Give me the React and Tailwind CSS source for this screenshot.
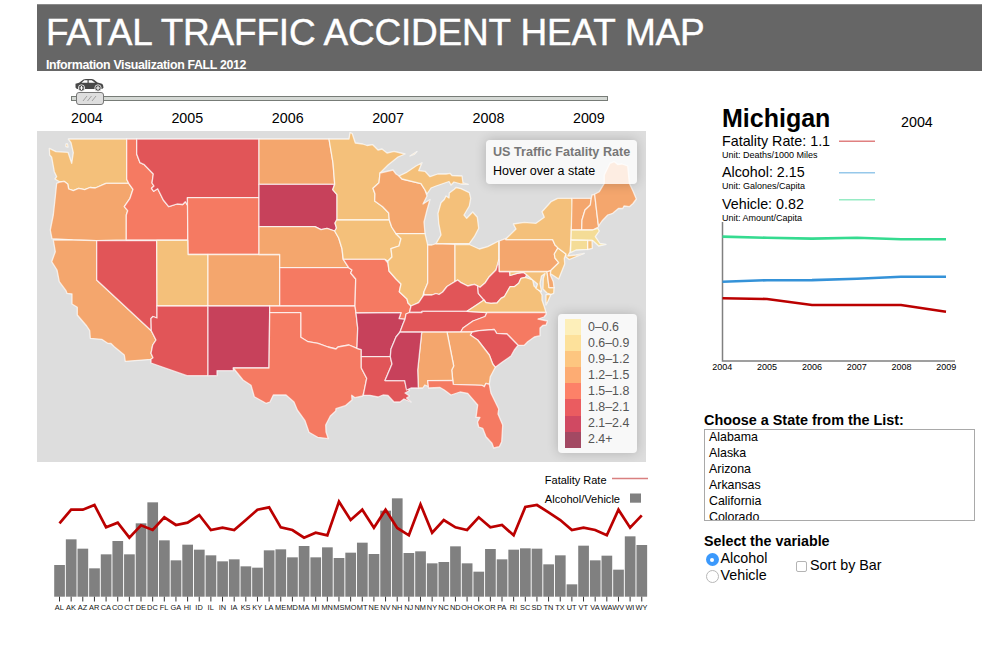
import React from "react";

const PALE = "#f4dc96";
const YELLOW = "#f4c07a";
const ORANGE = "#f4a66d";
const SALMON = "#f57a62";
const RED = "#e15558";
const CRIMSON = "#c7415b";

const STATES = [
  ["WA", YELLOW, "68.3,139 126.7,139 126.7,179.3 128.7,183.3 106,183.3 95.3,188 90,187.5 84.7,189.7 78.7,188.3 73.3,190.7 68.7,189 67.7,184 64,181.3 60,182 55,179 56.7,176.7 54.3,171.7 51.7,157.3 49.7,155 49.3,148.3 56,151.7 68,152.3 71.7,163.3 73.3,152.7 71,142.7"],
  ["WA-island", YELLOW, "66,144 67.5,144 68,147 66,146.5"],
  ["OR", ORANGE, "60,182 64,181.3 67.7,184 68.7,189 73.3,190.7 78.7,188.3 84.7,189.7 90,187.5 95.3,188 106,183.3 128.7,183.3 133,189.3 130,198.3 124.3,206.7 127.7,210.7 126.3,215 126.3,240 96,240.7 72.7,240 52,238.7 50.3,230 53.3,215 55.3,196.7 56.7,183.3"],
  ["CA", ORANGE, "53.3,240 72.7,240 96.7,240.7 96.7,280 151.3,330.7 156,340 152.7,345 151,353.3 153,357.7 151,359.3 125.3,361.3 124.3,355 114.3,346.7 111,343.5 107.7,343.3 101.7,339.3 90.3,338.3 89.7,330.7 86.7,326 77.3,315 77.3,307.3 72,304 72,294 67,293.3 66,290.7 59.3,281.7 57,270 51.7,261.7 55.3,251.7"],
  ["NV", RED, "96.7,240.7 156.7,240.3 157,318 153,316.5 151,318.5 151.3,330.7 96.7,280"],
  ["ID", SALMON, "126.7,139 136.7,139 136.7,154 140,162.7 144.3,164.7 153.3,174 152,183 154,186 151.5,188.3 153.7,191.3 157.7,188.7 163.3,200 168.7,206.7 177,204 182.7,204.5 185.3,201.7 187.7,205.3 187.7,240 126.3,240 126.3,215 127.7,210.7 124.3,206.7 130,198.3 133,189.3 128.7,183.3 126.7,179.3"],
  ["MT", RED, "136.7,139 259,139 259,197.7 187.4,197.7 187.7,205.3 185.3,201.7 182.7,204.5 177,204 168.7,206.7 163.3,200 157.7,188.7 153.7,191.3 151.5,188.3 154,186 152,183 153.3,174 144.3,164.7 140,162.7 136.7,154"],
  ["WY", SALMON, "187.4,197.7 259,197.7 259,254.5 188,254.5"],
  ["UT", YELLOW, "156.7,240.3 187.7,240.3 188,254.5 208,254.5 208,306 157,306"],
  ["CO", ORANGE, "208,254.5 279.7,254.5 279.7,306 208,306"],
  ["AZ", RED, "157,306 208,306 208,375.7 187,375.7 151,363 151,359.3 153,357.7 151,353.3 152.7,345 156,340 151.3,330.7 151,318.5 153,316.5 157,318"],
  ["NM", CRIMSON, "208,306 269.7,306 269,368 233.3,368 233.3,370.7 217,370.7 217,375.7 208,375.7"],
  ["ND", ORANGE, "259,139 329,139 333,163 334.7,184.3 259,184.3"],
  ["SD", CRIMSON, "259,184.3 334.7,184.3 332.7,189.7 337,194.7 337,220 335,223 336.5,228 334.7,231 327,228.3 321,229.7 315,226.7 259,226.7"],
  ["NE", ORANGE, "259,226.7 315,226.7 321,229.7 327,228.3 334.7,231 338.7,238 342,248.7 343,258.7 348.7,267.7 279.7,267.7 279.7,254.5 259,254.5"],
  ["KS", SALMON, "279.7,267.7 348.7,267.7 352,270 350.7,273 355.7,279 355,306 279.7,306"],
  ["OK", SALMON, "269.7,306 355,306 356,313 357.7,328 357,348.3 349,345 338,347 336,349 328,347 318,343.3 308,341.7 300.7,337.3 300.7,312.7 269.7,312.7"],
  ["TX", SALMON, "269.7,312.7 300.7,312.7 300.7,337.3 308,341.7 318,343.3 328,347 336,349 338,347 349,345 357,348.3 361.3,349.7 361.3,368 366.7,378.3 364,391.7 362.7,396 355,397.7 351.7,395.3 352,400 345.3,405.7 336,408.7 335.7,411 330.3,416 325.7,425 326,432 328.3,438.7 317.7,437.3 309,432.3 305,420.7 297.3,410 294,402 286,395 273.3,395 270,402 266,403.3 254.3,396.7 251,385.3 243,380 233.3,368 269,368"],
  ["MN", YELLOW, "329,139 349,139 350,132.7 352.2,133.5 355.3,143 362.7,144 367,145.5 372.7,144.7 378,150 382,149 387,153 394,151.3 405,154 398,157 388,165 380,173 379,182.7 373,188.3 375,194 374.7,201 382.7,206.7 388.7,213 389.3,220 337,220 337,194.7 332.7,189.7 334.7,184.3 333,163"],
  ["IA", YELLOW, "336.5,220 389.3,220 391.7,227 396,233.7 401,238.7 399,246 391,248.7 392,257 388,261 384.7,259.3 343.3,259.3 342,248.7 338.7,238 334.7,231 336.5,228 335,223"],
  ["MO", SALMON, "343.3,259.3 384.7,259.3 388,263 389,271 396,279 401,284 399.3,291.7 407,299 408,303 411,306 409.5,312.5 406,314 405,319.3 399,318.7 401,312.7 356,313 355,306 355.7,279 350.7,273 352,270 348.7,267.7"],
  ["AR", CRIMSON, "356,313 401,312.7 399,318.7 405,319.3 403,324 400,332 396,337 391,349 390.3,356.7 361.3,356.7 361.3,349.7 357,348.3 357.7,328"],
  ["LA", RED, "361.3,356.7 390.3,356.7 392,364 385,380.5 404.7,380.7 406.5,388 409.5,390.5 405,393 409.5,396 406.5,398 411,402 404,399 400,402 394,402 388,395.5 383,395 378,397 370,395.3 363.3,395.3 364,391.7 366.7,378.3 361.3,368"],
  ["WI", ORANGE, "380,173 393,170 396,174 400,176.5 402,179 421,183.7 425,190 427,196 423,204 430,199.5 427,210 424,222 425,233.7 396,233.7 391.7,227 389.3,220 388.7,213 382.7,206.7 374.7,201 375,194 373,188.3 379,182.7"],
  ["IL", YELLOW, "396,233.7 425,233.7 427.7,245 427.7,283 424,291.7 422.7,296.7 418.7,302.7 411,306 408,303 407,299 399.3,291.7 401,284 396,279 389,271 388,263 388,261 392,257 391,248.7 399,246 401,238.7"],
  ["IN", ORANGE, "427.7,245 432,245 436,243.6 455,244.3 455,281.5 451,284 447,286.5 442.7,292 439,294.5 436,293.5 432,295 424,295 424,291.7 427.7,283"],
  ["MI", YELLOW, "436,243.6 441,235 438.7,223.3 438,213.3 441,202.7 444.3,199.5 446,196 449,198 449.3,193 454.3,189.3 456,187.5 461,188.7 469.3,192.7 470.7,198.3 469.3,206 464,215 466.7,218.3 472.7,212 477.3,217.3 478.7,228.3 474.3,236.7 469.3,243.6"],
  ["MI-upper", YELLOW, "399,176 406,172.7 416,166 422,162.7 418.7,170.7 425,171.3 430,176.7 437.7,174 446,174 450,173.3 452,175.5 462,176 463,183 468.3,184.3 461,184 454,182 451,185 449,181.5 436,186 431,188 427,194 425,190 421,183.7 402,179"],
  ["MI-isle", YELLOW, "410,156 417,151.5 414,154.5"],
  ["OH", YELLOW, "455,244.3 469.3,244.5 479.3,249 487.7,246.7 498.7,241 498.7,261.7 496,270 489.3,276.7 485.3,282.7 480,287.3 474.3,284.3 467.7,286 461,282.7 457.7,280 455,281.5"],
  ["KY", RED, "411,306 418.7,302.7 422.7,296.7 424,295 432,295 436,293.5 439,294.5 442.7,292 447,286.5 451,284 457.7,280 461,282.7 467.7,286 474.3,284.3 477.7,286 478.3,293.3 484,300 475,306 467,311.3 422,311.3 422,312.5 409.5,312.5"],
  ["TN", RED, "409.5,312.5 422,312.5 422,311.3 467,311.3 487,312.5 485,316.5 473,321 463,328 460.7,332 400,332 403,324 405,319.3 406,314"],
  ["WV", RED, "498.7,260 499.3,271.5 509.7,271.5 510,275.5 517,273.3 523.3,272.3 526.7,274.7 525.3,277.3 521,278.3 518.7,283.3 514.3,286.7 510,286.7 504.3,296.7 501,298.3 497,303 491,303.3 486,302.7 484,300 478.3,293.3 477.7,286 480,287.3 485.3,282.7 489.3,276.7 496,270"],
  ["VA", YELLOW, "467,311.3 475,306 484,300 486,302.7 491,303.3 497,303 501,298.3 504.3,296.7 510,286.7 514.3,286.7 518.7,283.3 521,278.3 525.3,277.3 532.7,280 534,286 540,291.5 542,295 542,300 544.3,306.7 546,312.5 487,312.5"],
  ["VA-east", YELLOW, "546,294.7 551,294.3 547.7,301.7 546,305"],
  ["MD", YELLOW, "509.7,271.5 547,271.5 549,287.5 554,287.7 553.7,293.3 551,294.3 547,293 543,289 543.3,278.3 545,273.5 541.5,276 540,283.3 541.5,291.7 536,288.5 537.5,284 532.7,280 526.7,274.7 523.3,272.3 517,273.3 510,275.5"],
  ["DE", ORANGE, "547,271.5 551,270.5 550.3,275 553.3,281.7 554,287.7 549,287.5"],
  ["PA", ORANGE, "499.3,241 506,238.3 506,239.7 552.7,239.7 555,245 558,247.5 554.3,254 555,258 558.7,262.7 551,270.3 547,271.5 499.3,271.5"],
  ["NJ", YELLOW, "558,248 566,254 564.3,258.3 564.7,264 558.7,279 550.3,273.5 551,270.3 558.7,262.7 555,258 554.3,254"],
  ["NY", YELLOW, "506.3,238.5 516,229 513.3,224 524.3,222.3 536,223.3 544.3,217.3 542,211.7 551,201.7 557.7,198.3 572,198.3 572.7,210 571.3,230 571,240 570,252 567.7,256 576,255 584.3,253.3 569.3,259.5 566,257 566,254 558,248 555,245 552.7,239.7 506,239.7"],
  ["VT", ORANGE, "572,198.3 591.3,198.3 590.3,205 585,210 582,220 581.7,230 571.3,230"],
  ["NH", ORANGE, "591.3,198.3 592,195 594.7,194.3 596.5,210 598,223.3 598.7,226.7 592.7,230 581.7,230 582,220 585,210 590.3,205"],
  ["ME", ORANGE, "594.7,194.3 599.3,191.7 604.3,183.3 604.3,175 610,163.3 614.3,161.7 617.7,164.5 622,164 627.7,166 629.3,183.3 633.3,191.7 636.3,199 633,203.5 629.3,206.7 624,206 622.7,208.5 618.7,208.3 612.7,213.3 607.7,215 602,221 598.5,226 596.5,210"],
  ["MA", PALE, "571.3,230 592.7,230 597.7,228.3 599.3,231 595.3,236.7 600,243.5 606,244.3 598.7,246 596,243.5 592.7,240.5 571,240"],
  ["CT", PALE, "571,240 587.7,240.3 587.7,249.3 576,250 570.5,252.7"],
  ["RI", YELLOW, "587.7,240.3 592,240.5 592.3,248.3 587.7,249.5"],
  ["NC", SALMON, "487,312.5 546,312.5 546,314.5 544,317 538,319 547.5,321 546,325 542.7,325.5 540,328 540,335.7 534.3,337 527.7,341.7 524.3,345.3 518,345.3 507,334 496.7,333.3 494.3,329.5 479.3,330.7 472,332 460.7,332 463,328 473,321 485,316.5"],
  ["SC", RED, "472,332 479.3,330.7 494.3,329.5 496.7,333.3 507,334 518,345.3 514.3,350 511,356 502.7,361.7 495.3,367.3 492.7,364 489.3,355 477.7,340 470.3,335"],
  ["GA", ORANGE, "447,332.2 472,332 470.3,335 477.7,340 489.3,355 492.7,364 495.3,367.3 490.3,376.7 489.3,384.3 486,383.3 484.3,386.7 482,385.3 453.3,384.3 451.7,370 453.7,366"],
  ["AL", ORANGE, "421.7,332.2 447,332.2 453.7,366 451.7,370 452.7,380.5 427.7,380.7 428.5,386.5 424.8,385 422.7,388 418.3,388 417.7,370"],
  ["MS", CRIMSON, "400,332.2 421.7,332.2 417.7,370 418.3,388 411,388 406.5,390 404.7,380.7 385,380.5 392,364 390.3,356.7 391,349 396,337"],
  ["FL", SALMON, "427.7,380.7 452.7,380.5 453.3,384.3 482,385.3 484.3,386.7 486,383.3 489.3,384.3 491,393.3 498.7,409 498,414 502.7,425 501.7,441.7 499.3,446.7 493.7,448 492,443.3 486,436.7 482.7,428.3 478.7,427 477.5,422 480,417.5 476,417.3 477.7,405 467.7,393.3 460,392 451,395 444.3,390 440,387.5 428.5,388"],
];

const BARS = [
  ["AL", 300, 175], ["AK", 223, 134], ["AZ", 251, 134], ["AR", 310, 120], ["CA", 268, 187],
  ["CO", 228, 173], ["CT", 268, 218], ["DE", 175, 181], ["DC", 112, 195], ["FL", 226, 157],
  ["GA", 286, 180], ["HI", 239, 173], ["ID", 254, 150], ["IL", 271, 195], ["IN", 289, 188],
  ["IA", 283, 195], ["KS", 304, 165], ["KY", 308, 134], ["LA", 256, 127], ["ME", 253, 187],
  ["MD", 277, 195], ["MA", 243, 218], ["MI", 277, 203], ["MN", 247, 211], ["MS", 279, 110],
  ["MO", 263, 165], ["MT", 233, 134], ["NE", 267, 188], ["NV", 137, 134], ["NH", 100, 189],
  ["NJ", 264, 211], ["NM", 259, 118], ["NY", 295, 203], ["NC", 291, 165], ["ND", 244, 187],
  ["OH", 295, 195], ["OK", 320, 157], ["OR", 252, 187], ["PA", 283, 180], ["RI", 254, 211],
  ["SC", 250, 126], ["SD", 251, 120], ["TN", 298, 142], ["TX", 271, 165], ["UT", 358, 195],
  ["VT", 242, 188], ["VA", 286, 195], ["WA", 272, 211], ["WV", 314, 134], ["WI", 214, 188],
  ["WY", 240, 151],
];

const GRADES = [
  ["bg-[#fdefba]", "0–0.6"],
  ["bg-[#fde19b]", "0.6–0.9"],
  ["bg-[#fdc680]", "0.9–1.2"],
  ["bg-[#fdac73]", "1.2–1.5"],
  ["bg-[#fd8168]", "1.5–1.8"],
  ["bg-[#ea5c60]", "1.8–2.1"],
  ["bg-[#d04962]", "2.1–2.4"],
  ["bg-[#a34963]", "2.4+"],
];

const YEARS = ["2004", "2005", "2006", "2007", "2008", "2009"];

function Header() {
  return (
    <header className="ml-[37px] h-[67px] w-[945px] overflow-hidden border-t border-[#8a8a8a] bg-[#666] pl-[9px] text-white">
      <h1 className="h-[52px] pt-[5px] text-[37px] leading-[46px] tracking-[-0.2px] whitespace-nowrap [-webkit-text-stroke:0.4px_white]">FATAL TRAFFIC ACCIDENT HEAT MAP</h1>
      <p className="text-[12.4px] leading-[17px] font-bold tracking-[-0.35px] whitespace-nowrap">Information Visualization FALL 2012</p>
    </header>
  );
}

function YearSlider() {
  return (
    <div className="flex h-[60px] flex-col pl-[34px]">
      <svg className="mt-[7px] ml-[4px] h-[14px] w-[29px]" viewBox="0 0 29 14">
        <path d="M0.5 9.5 V5.8 L4 4.8 L8.5 1.5 Q9.5 1 11 1 H16.5 Q18 1 19 1.8 L22.5 4.6 L27 5.8 Q28.3 6.5 28.5 9.8 L27 11 H2z" fill="#484848" />
        <path d="M6.5 4.8 L9.3 2.3 H12.5 V4.8z M13.7 2.3 H16.7 L20.2 4.8 H13.7z" fill="#fff" />
        <circle cx="6.5" cy="10" r="3.2" fill="#484848" stroke="#fff" strokeWidth="0.8" />
        <circle cx="23" cy="10" r="3.2" fill="#484848" stroke="#fff" strokeWidth="0.8" />
        <path d="M6.5 8 V12 M4.5 10 H8.5 M23 8 V12 M21 10 H25" stroke="#fff" strokeWidth="1.1" />
      </svg>
      <div className="relative mt-[4px] h-[5px] w-[537px] border border-[#777c77] bg-[#d5d9d5]">
        <div className="absolute -top-[5px] left-[3.5px] flex h-[13px] w-[28px] items-center justify-center rounded-[3px] border border-[#777] bg-[#dedede]">
          <svg className="h-[7px] w-[15px]" viewBox="0 0 15 7">
            <path d="M1 6 L5 1 M5.5 6 L9.5 1 M10 6 L14 1" stroke="#999" strokeWidth="0.9" fill="none" />
          </svg>
        </div>
      </div>
      <div className="mt-[8px] flex text-[14.3px] leading-[18px]">
        {YEARS.map((y) => (
          <span key={y} className="w-[100.4px] shrink-0">{y}</span>
        ))}
      </div>
    </div>
  );
}

function HeatMap() {
  return (
    <div className="relative h-[331px] w-[609px] overflow-hidden bg-[#ddd]">
      <svg className="block h-[331px] w-[609px]" viewBox="37 131 609 331">
        {STATES.map(([id, fill, points]) => (
          <polygon key={id} points={points} fill={fill} stroke="#fff" strokeOpacity="0.7" strokeWidth="1.3" strokeLinejoin="round" />
        ))}
      </svg>
      <div className="absolute top-[9px] left-[449px] h-[44px] w-[151px] rounded-[4px] bg-white/80 px-[7px] pt-[3px] whitespace-nowrap shadow-[0_0_12px_rgba(0,0,0,0.2)]">
        <h4 className="text-[12.6px] leading-[19px] font-bold text-[#777]">US Traffic Fatality Rate</h4>
        <p className="text-[12.5px] leading-[19px]">Hover over a state</p>
      </div>
      <div className="absolute top-[183px] left-[520.5px] flex h-[139px] w-[79px] flex-col rounded-[4px] bg-[#f8f8f8] pt-[5px] pl-[7px] shadow-[0_0_12px_rgba(0,0,0,0.2)]">
        {GRADES.map(([color, label]) => (
          <div key={label} className="flex h-[16.1px] items-center gap-[7.5px] text-[12.4px] text-[#555]">
            <span className={"h-full w-[16px] " + color} />
            {label}
          </div>
        ))}
      </div>
    </div>
  );
}

function StateBars() {
  const step = 11.645;
  const toY = (v) => 3 + v / 3;
  const line = BARS.map(([, , v], i) => `${22.5 + i * step},${toY(v)}`).join(" ");
  return (
    <svg className="block h-[160px] w-[615px]" viewBox="0 0 615 160">
      {BARS.map(([id, top], i) => (
        <g key={id}>
          <rect x={17.2 + i * step} y={toY(top)} width="10.7" height={134.7 - toY(top)} fill="#808080" />
          <path d={`M${22.5 + i * step} 134.7 V139.5`} stroke="#333" strokeWidth="1" />
          <text x={22.3 + i * step} y="147.7" fontSize="7.4" textAnchor="middle" fill="#111">{id}</text>
        </g>
      ))}
      <polyline points={line} fill="none" stroke="#bb0000" strokeWidth="2.7" />
      <rect x="507" y="8" width="78" height="37" fill="#fff" />
      <text x="507.8" y="22" fontSize="11">Fatality Rate</text>
      <path d="M575 16.5 H611" stroke="#d98080" strokeWidth="1.5" />
      <text x="507.8" y="40.5" fontSize="11.1">Alcohol/Vehicle</text>
      <rect x="593" y="31.5" width="11" height="9.2" fill="#808080" />
    </svg>
  );
}

const METRICS = [
  ["Fatality Rate: 1.1", "Unit: Deaths/1000 Miles"],
  ["Alcohol: 2.15", "Unit: Galones/Capita"],
  ["Vehicle: 0.82", "Unit: Amount/Capita"],
];

function StateDetail() {
  return (
    <section className="pl-[18px]">
      <div className="flex h-[28px] items-baseline leading-[28px]">
        <h2 className="w-[179px] text-[25px] font-bold">Michigan</h2>
        <span className="text-[14.3px]">2004</span>
      </div>
      <div className="flex">
        <div className="w-[117px] whitespace-nowrap">
          {METRICS.map(([value, unit]) => (
            <div key={value} className="h-[31.3px]">
              <p className="text-[14.3px] leading-[18px]">{value}</p>
              <p className="text-[9px] leading-[10px]">{unit}</p>
            </div>
          ))}
        </div>
        <svg className="h-[94px] w-[40px]" viewBox="0 0 40 94">
          <path d="M0 9.3 H36" stroke="#e08080" strokeWidth="1.6" />
          <path d="M0 40.7 H36" stroke="#96c8ea" strokeWidth="1.6" />
          <path d="M0 67.7 H36" stroke="#96ebc4" strokeWidth="1.6" />
        </svg>
      </div>
      <svg className="-mt-[4px] -ml-[18px] block h-[154px] w-[270px]" viewBox="704 222 270 154">
        <path d="M722.5 222 V361 H955" fill="none" stroke="#808080" strokeWidth="1.5" />
        <polyline points="722.5,236.6 767,237.8 812,238.6 857,237.8 901,239.2 946,239.2" fill="none" stroke="#35db90" strokeWidth="2.6" />
        <polyline points="722.5,281.7 767,280.2 812,280.1 857,278.7 901,276.8 946,276.8" fill="none" stroke="#3492d8" strokeWidth="2.6" />
        <polyline points="722.5,298.2 767,299 812,305 857,305 901,305 946,311.7" fill="none" stroke="#bb0000" strokeWidth="2.6" />
        {YEARS.map((y, i) => (
          <text key={y} x={722.3 + i * 44.8} y="370" fontSize="9" textAnchor="middle">{y}</text>
        ))}
      </svg>
    </section>
  );
}

const LIST = ["Alabama", "Alaska", "Arizona", "Arkansas", "California", "Colorado"];

function Controls() {
  return (
    <section className="mt-[35px]">
      <h3 className="text-[14.4px] leading-[18px] font-bold">Choose a State from the List:</h3>
      <ul className="h-[92px] w-[271px] overflow-hidden border border-[#a9a9a9] pl-[4px] text-[12.4px] leading-[15.9px]">
        {LIST.map((s) => (
          <li key={s}>{s}</li>
        ))}
      </ul>
      <h3 className="mt-[12px] text-[14.3px] leading-[17px] font-bold">Select the variable</h3>
      <div className="flex text-[14.3px] leading-[17px]">
        <div className="w-[92px] pl-[2px]">
          <label className="flex items-center gap-[2px]">
            <span className="mt-[2px] flex size-[12.5px] items-center justify-center rounded-full bg-[#3b99fc]">
              <span className="size-[4px] rounded-full bg-white" />
            </span>
            Alcohol
          </label>
          <label className="flex items-center gap-[2px]">
            <span className="mt-[2px] size-[12.5px] rounded-full border border-[#b8b8b8] bg-white" />
            Vehicle
          </label>
        </div>
        <label className="mt-[7px] flex items-center gap-[3px] self-start">
          <span className="mt-[2px] size-[11px] rounded-[2px] border border-[#b4b4b4] bg-white" />
          Sort by Bar
        </label>
      </div>
    </section>
  );
}

export default function App() {
  return (
    <div className="h-[645px] w-[1000px] overflow-hidden bg-white pt-[4px] font-['Liberation_Sans',Arial,sans-serif] text-black">
      <Header />
      <main className="flex pl-[37px]">
        <div className="w-[667px]">
          <YearSlider />
          <HeatMap />
          <StateBars />
        </div>
        <aside className="w-[290px] pt-[33px]">
          <StateDetail />
          <Controls />
        </aside>
      </main>
    </div>
  );
}
